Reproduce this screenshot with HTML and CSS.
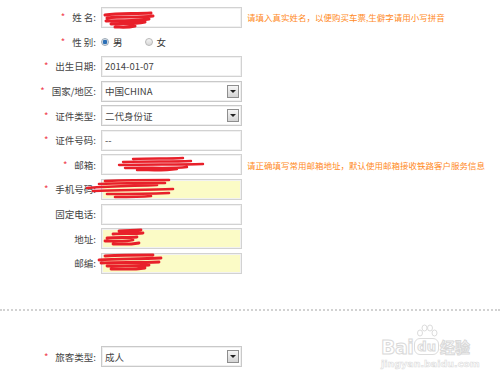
FILE: index.html
```html
<!DOCTYPE html>
<html>
<head>
  <title>乘车人信息</title>
  <link rel="stylesheet" href="styles.css">
</head>
<body>
  <div class="form">
    <div class="row">
      <label class="lbl"><i>*</i>姓 名:</label>
      <span class="field">
        <input type="text" class="txt" value="">
        <svg class="scribble" width="60" height="20" viewBox="0 0 60 20">
          <path d="M2 4 C15 2 30 3 48 2 M4 7 C20 5 34 7 50 5 M3 10 C18 9 30 11 46 8 M8 13 C20 12 28 14 42 11 M12 16 C18 16 24 17 32 15" stroke="#e8202a" stroke-width="3" fill="none" stroke-linecap="round"/>
        </svg>
      </span>
      <span class="tip">请填入真实姓名，以便购买车票,生僻字请用小写拼音</span>
    </div>

    <div class="row">
      <label class="lbl"><i>*</i>性 别:</label>
      <span class="radios">
        <span class="radio on"></span><span class="opt">男</span>
        <span class="radio"></span><span class="opt">女</span>
      </span>
    </div>

    <div class="row">
      <label class="lbl"><i>*</i>出生日期:</label>
      <span class="field"><input type="text" class="txt" value="2014-01-07"></span>
    </div>

    <div class="row">
      <label class="lbl"><i>*</i>国家/地区:</label>
      <span class="select"><span class="val">中国CHINA</span><span class="arrow"></span></span>
    </div>

    <div class="row">
      <label class="lbl"><i>*</i>证件类型:</label>
      <span class="select"><span class="val">二代身份证</span><span class="arrow"></span></span>
    </div>

    <div class="row">
      <label class="lbl"><i>*</i>证件号码:</label>
      <span class="field"><input type="text" class="txt" value="--"></span>
    </div>

    <div class="row">
      <label class="lbl"><i>*</i>邮箱:</label>
      <span class="field">
        <input type="text" class="txt" value="">
        <svg class="scribble s-mail" width="90" height="16" viewBox="0 0 90 16">
          <path d="M16 2 C35 1 50 2 66 1 M6 5 C30 4 55 5 74 4 M2 8 C30 7 60 8 86 7 M8 11 C30 10 50 12 70 10 M20 13 C35 13 45 14 60 12" stroke="#e8202a" stroke-width="2.4" fill="none" stroke-linecap="round"/>
        </svg>
      </span>
      <span class="tip">请正确填写常用邮箱地址，默认使用邮箱接收铁路客户服务信息</span>
    </div>

    <div class="row">
      <label class="lbl"><i>*</i>手机号码:</label>
      <span class="field">
        <input type="text" class="txt yellow" value="">
        <svg class="scribble s-phone" width="92" height="20" viewBox="0 0 92 20">
          <path d="M20 2 C45 1 65 1 84 1 M14 5 C40 4 60 4 80 4 M2 9 C30 7 50 7 72 6 M8 12 C35 11 60 11 88 10 M22 15 C40 15 60 15 84 14 M30 18 C45 18 55 18 66 17" stroke="#e8202a" stroke-width="2.6" fill="none" stroke-linecap="round"/>
        </svg>
      </span>
    </div>

    <div class="row">
      <label class="lbl">固定电话:</label>
      <span class="field"><input type="text" class="txt" value=""></span>
    </div>

    <div class="row">
      <label class="lbl">地址:</label>
      <span class="field">
        <input type="text" class="txt yellow" value="">
        <svg class="scribble s-addr" width="44" height="18" viewBox="0 0 44 18">
          <path d="M16 2 C24 1 30 2 38 1 M10 5 C20 4 30 5 40 4 M4 9 C14 8 24 9 34 8 M2 12 C12 12 22 13 30 11 M10 15 C18 15 24 16 36 14" stroke="#e8202a" stroke-width="2.8" fill="none" stroke-linecap="round"/>
        </svg>
      </span>
    </div>

    <div class="row">
      <label class="lbl">邮编:</label>
      <span class="field">
        <input type="text" class="txt yellow" value="">
        <svg class="scribble s-zip" width="70" height="18" viewBox="0 0 70 18">
          <path d="M8 2 C25 1 40 1 56 1 M2 6 C20 5 40 5 64 4 M4 9 C20 8 40 9 62 8 M10 12 C25 12 40 12 52 11 M14 15 C25 15 35 16 48 14" stroke="#e8202a" stroke-width="2.8" fill="none" stroke-linecap="round"/>
        </svg>
      </span>
    </div>
  </div>

  <div class="sep"></div>

  <div class="form form-bottom">
    <div class="row">
      <label class="lbl"><i>*</i>旅客类型:</label>
      <span class="select"><span class="val">成人</span><span class="arrow"></span></span>
    </div>
  </div>

  <div class="watermark">
    <div class="wm-logo">
      <span class="wm-bai">Bai</span>
      <span class="wm-du">
        <svg class="paw" width="24" height="16" viewBox="0 0 24 16">
          <g fill="none" stroke="#dcdcdc" stroke-width="1">
            <ellipse cx="5" cy="9" rx="2.5" ry="3"/>
            <ellipse cx="9.5" cy="4" rx="2.5" ry="3"/>
            <ellipse cx="15" cy="4" rx="2.5" ry="3"/>
            <ellipse cx="19.5" cy="9" rx="2.5" ry="3"/>
          </g>
        </svg>
        <span class="du-box">du</span>
      </span>
      <span class="wm-jy">经验</span>
    </div>
    <div class="wm-url">jingyan.baidu.com</div>
  </div>
</body>
</html>
```

FILE: styles.css
```css
body {
  margin: 0;
  padding: 0;
  background: #fff;
  font-family: "Noto Sans CJK SC", "DejaVu Sans", sans-serif;
  font-size: 9.5px;
  color: #333;
  width: 500px;
  height: 379px;
  overflow: hidden;
  position: relative;
}

.form {
  padding-top: 5px;
}

.row {
  display: flex;
  align-items: center;
  height: 24.6px;
}

.lbl {
  width: 96px;
  text-align: right;
  color: #444;
  flex-shrink: 0;
}

.lbl i {
  font-style: normal;
  color: #f03c4a;
  margin-right: 7px;
}

.field {
  position: relative;
  margin-left: 5px;
  width: 141px;
  height: 21px;
  flex-shrink: 0;
}

.txt {
  box-sizing: border-box;
  width: 141px;
  height: 21px;
  margin: 0;
  padding: 0 3px;
  border: 1px solid #d2d2d2;
  box-shadow: inset 0 0 0 1px #f1f1f1;
  font-family: "Noto Sans CJK SC", "DejaVu Sans", sans-serif;
  font-size: 9.5px;
  color: #444;
  background: #fff;
  outline: none;
}

.txt.yellow {
  background: #fbfbc6;
}

.scribble {
  position: absolute;
  left: 2px;
  top: 4px;
  overflow: visible;
}

.s-mail {
  left: 16px;
  top: 3px;
}

.s-phone {
  left: -16px;
  top: 0;
}

.s-addr {
  left: 2px;
  top: 1px;
}

.s-zip {
  left: -4px;
  top: 1px;
}

.tip {
  margin-left: 5px;
  font-size: 8.5px;
  color: #ff8a1e;
  white-space: nowrap;
}

.radios {
  display: flex;
  align-items: center;
  margin-left: 5px;
}

.radio {
  box-sizing: border-box;
  width: 8px;
  height: 8px;
  border-radius: 50%;
  border: 1px solid #b8b8b8;
  background: linear-gradient(#f4f4f4, #d8d8d8);
}

.radio.on {
  background: radial-gradient(circle, #2b6fb6 0, #2b6fb6 2px, #dfe6ee 2.6px);
  border-color: #9aa7b4;
}

.opt {
  margin-left: 4px;
  margin-right: 22px;
}

.select {
  box-sizing: border-box;
  position: relative;
  margin-left: 5px;
  width: 141px;
  height: 21px;
  border: 1px solid #c9c9c9;
  box-shadow: inset 0 0 0 1px #efefef;
  display: flex;
  align-items: center;
  flex-shrink: 0;
}

.select .val {
  flex: 1;
  padding-left: 3px;
  color: #444;
}

.arrow {
  box-sizing: border-box;
  width: 12px;
  height: 13px;
  margin-right: 2px;
  border: 1px solid #8e8e8e;
  background: linear-gradient(#f6f6f6, #d4d4d4);
  display: flex;
  align-items: center;
  justify-content: center;
}

.arrow::after {
  content: "";
  border-left: 3px solid transparent;
  border-right: 3px solid transparent;
  border-top: 3px solid #222;
}

.sep {
  margin-top: 33px;
  border-top: 2px dotted #d2d2d2;
}

.form-bottom {
  padding-top: 34px;
}

.watermark {
  position: absolute;
  left: 381px;
  top: 324px;
  width: 92px;
}

.wm-logo {
  display: flex;
  align-items: flex-end;
  height: 33px;
}

.wm-bai,
.wm-jy,
.du-box,
.wm-url {
  font-family: "DejaVu Sans", sans-serif;
  color: #fff;
  -webkit-text-stroke: 1px #d9d9d9;
  font-weight: bold;
}

.wm-bai {
  font-size: 19px;
  line-height: 20px;
  letter-spacing: -0.5px;
}

.wm-du {
  display: flex;
  flex-direction: column;
  align-items: center;
  margin: 0 1px;
}

.paw {
  margin-bottom: -2px;
}

.du-box {
  font-size: 13px;
  line-height: 15px;
  padding: 0 2px;
  border: 1px solid #dcdcdc;
  border-radius: 6px;
  margin-bottom: 2px;
}

.wm-jy {
  font-family: "Noto Sans CJK SC", sans-serif;
  font-size: 15px;
  line-height: 20px;
}

.wm-url {
  font-size: 9.5px;
  line-height: 11px;
  -webkit-text-stroke: 0.6px #dcdcdc;
  margin-top: 1px;
}
```
